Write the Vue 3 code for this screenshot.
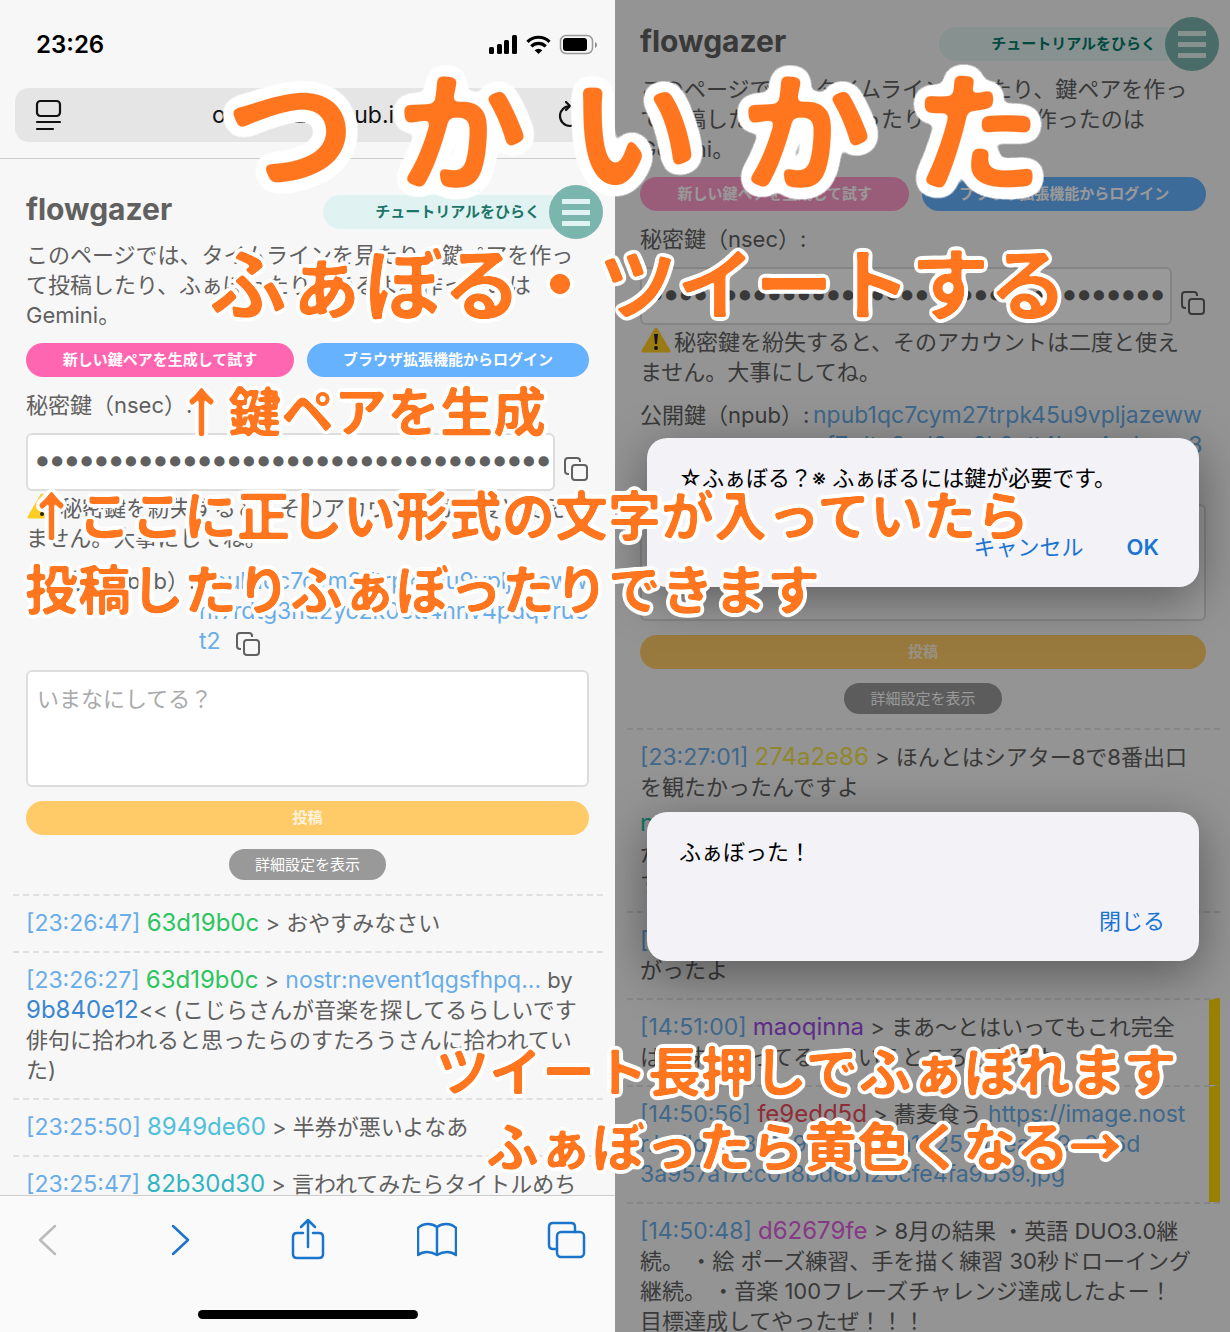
<script setup>
const npub = 'npub1qc7cym27trpk45u9vpljazeww\nnf7rdtg3nd2yc2k0ett4hnv4pdqvru3\nt2'
const secret = 'x'.repeat(35)

const phones = [
  {
    id: 'browse',
    posts: [
      [{ time: '23:26:47' }, { name: '63d19b0c', color: '#2cc45e' }, { text: ' > おやすみなさい' }],
      [
        { time: '23:26:27' },
        { name: '63d19b0c', color: '#2cc45e' },
        { text: ' > ' },
        { link: 'nostr:nevent1qgsfhpq...' },
        { text: ' by\n' },
        { name: '9b840e12', color: '#3b86cf' },
        { text: '<< (こじらさんが音楽を探してるらしいです\n俳句に拾われると思ったらのすたろうさんに拾われてい\nた)' },
      ],
      [{ time: '23:25:50' }, { name: '8949de60', color: '#4fc0da' }, { text: ' > 半券が悪いよなあ' }],
      [{ time: '23:25:47' }, { name: '82b30d30', color: '#30b5c0' }, { text: ' > 言われてみたらタイトルめち' }],
    ],
  },
  {
    id: 'faved',
    posts: [
      [{ time: '23:27:01' }, { name: '274a2e86', color: '#f2e24a' }, { text: ' > ほんとはシアター8で8番出口\nを観たかったんですよ' }],
      [{ name: 'n', color: '#20c0a8' }, { text: '\nか\nす' }],
      [{ link: '[' }, { text: '\nがったよ' }],
      [{ time: '14:51:00' }, { name: 'maoqinna', color: '#9b4be6' }, { text: ' > まあ〜とはいってもこれ完全\nは趣味でやってるっていうところもあるよ' }],
      [
        { time: '14:50:56' },
        { name: 'fe9edd5d', color: '#f04a5c' },
        { text: ' > 蕎麦食う ' },
        { link: 'https://image.nost\nr.build/5c3f6e90b28ea1a14257d3ea7b9c0e6d\n3a957a17cc018bd6b126cfe4fa9b59.jpg' },
      ],
      [
        { time: '14:50:48' },
        { name: 'd62679fe', color: '#e060e0' },
        { text: ' > 8月の結果 ・英語 DUO3.0継\n続。 ・絵 ポーズ練習、手を描く練習 30秒ドローイング\n継続。 ・音楽 100フレーズチャレンジ達成したよー！\n目標達成してやったぜ！！！' },
      ],
    ],
    faved: [3, 4],
  },
]
</script>

<template>
  <main class="guide">
    <section v-for="p in phones" :key="p.id" class="phone" :class="p.id">
      <template v-if="p.id === 'browse'">
        <div class="status">
          <span class="clock">23:26</span>
          <svg width="110" height="24" viewBox="0 0 110 24" aria-hidden="true">
            <g fill="#000">
              <rect x="1" y="14" width="5" height="7" rx="1.5" />
              <rect x="9" y="11" width="5" height="10" rx="1.5" />
              <rect x="16" y="7" width="5" height="14" rx="1.5" />
              <rect x="24" y="2" width="5" height="19" rx="1.5" />
              <path d="M50.500 21l-3.800-3.800a5.400 5.400 0 0 1 7.600 0z" />
              <rect x="75" y="5" width="24" height="13" rx="3" />
            </g>
            <g fill="none" stroke="#000" stroke-width="3.200">
              <path d="M39.500 8.800a15.600 15.600 0 0 1 22 0" />
              <path d="M43.300 13.300a10.200 10.200 0 0 1 14.400 0" />
            </g>
            <rect x="72.500" y="2.500" width="32" height="18" rx="5.500" fill="none" stroke="#999" stroke-width="1.500" />
            <path d="M107 9v6q2-1 2-3t-2-3z" fill="#888" />
          </svg>
        </div>
        <div class="address">
          <svg width="30" height="32" viewBox="0 0 30 32" fill="none" stroke="#111" stroke-width="2.200" stroke-linecap="round" aria-hidden="true">
            <rect x="3" y="2" width="23" height="15" rx="3.500" />
            <path d="M3 23h23M3 30h16" />
          </svg>
          <span>ompomz.github.io</span>
          <svg width="26" height="28" viewBox="0 0 26 28" fill="none" stroke="#111" stroke-width="2.200" stroke-linecap="round" aria-hidden="true">
            <path d="M14 5a10 10 0 1 0 10 10M14 5l-4-4M14 5l-4 4" />
          </svg>
        </div>
      </template>

      <div class="app">
        <header>
          <h1>flowgazer</h1>
          <a class="tutorial" href="#tutorial">チュートリアルをひらく</a>
          <button class="menu" aria-label="メニュー"><i></i><i></i><i></i></button>
        </header>
        <p class="intro">このページでは、タイムラインを見たり、鍵ペアを作っ<br />て投稿したり、ふぁぼったりできるよ。作ったのは<br />Gemini。</p>
        <div class="actions">
          <button class="pill pink">新しい鍵ペアを生成して試す</button>
          <button class="pill blue">ブラウザ拡張機能からログイン</button>
        </div>
        <label class="nsec-label" :for="p.id + '-nsec'">秘密鍵（nsec）:</label>
        <div class="nsec">
          <input :id="p.id + '-nsec'" type="password" :value="secret" />
          <button class="copy" aria-label="コピー">
            <svg width="26" height="26" viewBox="0 0 26 26" fill="none" stroke="currentColor" stroke-width="2" aria-hidden="true">
              <path d="M6 18H5a3 3 0 0 1-3-3V5a3 3 0 0 1 3-3h9a3 3 0 0 1 3 3v1" />
              <rect x="9" y="9" width="15" height="15" rx="3" />
            </svg>
          </button>
        </div>
        <p class="warning">
          <svg class="sign" width="32" height="28" viewBox="0 0 32 28" aria-hidden="true">
            <path d="M16 3L29 25H3z" fill="#fc2" stroke="#fc2" stroke-width="3" stroke-linejoin="round" />
            <path d="M14 8h4l-1 10h-2z" fill="#222" /><circle cx="16" cy="22" r="2" fill="#222" />
          </svg>秘密鍵を紛失すると、そのアカウントは二度と使え<br />ません。大事にしてね。
        </p>
        <div class="npub">
          <span>公開鍵（npub）:</span>
          <div>
            <a href="#npub">{{ npub }}</a>
            <button class="copy" aria-label="コピー">
              <svg width="26" height="26" viewBox="0 0 26 26" fill="none" stroke="currentColor" stroke-width="2" aria-hidden="true">
                <path d="M6 18H5a3 3 0 0 1-3-3V5a3 3 0 0 1 3-3h9a3 3 0 0 1 3 3v1" />
                <rect x="9" y="9" width="15" height="15" rx="3" />
              </svg>
            </button>
          </div>
        </div>
        <textarea :placeholder="p.id === 'browse' ? 'いまなにしてる？' : ''" aria-label="投稿内容"></textarea>
        <button class="pill post">投稿</button>
        <button class="pill more">詳細設定を表示</button>
      </div>

      <ul class="feed">
        <li v-for="(post, i) in p.posts" :key="i" :class="{ faved: p.faved?.includes(i) }"><template v-for="(s, j) in post" :key="j"><a v-if="s.time" href="#post">[{{ s.time }}]</a><template v-if="s.time">{{ ' ' }}</template><b v-if="s.name" :style="{ color: s.color }">{{ s.name }}</b><a v-if="s.link" href="#link">{{ s.link }}</a><template v-if="s.text">{{ s.text }}</template></template></li>
      </ul>

      <nav v-if="p.id === 'browse'" class="toolbar">
        <div class="tools">
          <button aria-label="戻る" class="off"><svg width="40" height="44" viewBox="0 0 40 44"><path d="M27 8L12 22l15 14" /></svg></button>
          <button aria-label="進む"><svg width="40" height="44" viewBox="0 0 40 44"><path d="M15 8l15 14-15 14" /></svg></button>
          <button aria-label="共有"><svg width="40" height="44" viewBox="0 0 40 44"><path d="M15 15H9q-4 0-4 4v17q0 4 4 4h22q4 0 4-4V19q0-4-4-4h-6M20 29V3M13 9l7-7 7 7" /></svg></button>
          <button aria-label="ブックマーク"><svg width="40" height="44" viewBox="0 0 40 44"><path d="M20 9q-4-3-9-3-6 0-10 4v27q4-3 9-3t10 3q5-3 10-3t9 3V10q-4-4-10-4-5 0-9 3zv28" /></svg></button>
          <button aria-label="タブ"><svg width="40" height="44" viewBox="0 0 40 44"><rect x="10" y="14" width="27" height="25" rx="4" /><path d="M10 31H6q-4 0-4-4V9q0-4 4-4h18q4 0 4 4v5" /></svg></button>
        </div>
        <div class="home"></div>
      </nav>

      <template v-if="p.id === 'faved'">
        <div class="dialog ask" role="dialog">
          <p>☆ふぁぼる？※ ふぁぼるには鍵が必要です。</p>
          <div><button>キャンセル</button><button class="ok">OK</button></div>
        </div>
        <div class="dialog done" role="dialog">
          <p>ふぁぼった！</p>
          <div><button>閉じる</button></div>
        </div>
      </template>
    </section>

    <svg class="defs" width="0" height="0" aria-hidden="true">
      <filter id="marker-large" x="-5%" y="-20%" width="110%" height="140%" color-interpolation-filters="sRGB">
        <feGaussianBlur in="SourceAlpha" stdDeviation="3" />
        <feComponentTransfer result="round"><feFuncA type="linear" slope="8" intercept="-3" /></feComponentTransfer>
        <feFlood flood-color="#ff761f" /><feComposite in2="round" operator="in" result="ink" />
        <feGaussianBlur in="round" stdDeviation="7" />
        <feComponentTransfer result="halo"><feFuncA type="linear" slope="50" intercept="-1" /></feComponentTransfer>
        <feFlood flood-color="#fff" /><feComposite in2="halo" operator="in" result="edge" />
        <feMerge><feMergeNode in="edge" /><feMergeNode in="ink" /></feMerge>
      </filter>
      <filter id="marker" x="-5%" y="-20%" width="110%" height="140%" color-interpolation-filters="sRGB">
        <feGaussianBlur in="SourceAlpha" stdDeviation="1.200" />
        <feComponentTransfer result="round"><feFuncA type="linear" slope="4" intercept="-1.400" /></feComponentTransfer>
        <feFlood flood-color="#ff761f" /><feComposite in2="round" operator="in" result="ink" />
        <feGaussianBlur in="round" stdDeviation="2.400" />
        <feComponentTransfer result="halo"><feFuncA type="linear" slope="24" intercept="-0.700" /></feComponentTransfer>
        <feFlood flood-color="#fff" /><feComposite in2="halo" operator="in" result="edge" />
        <feMerge><feMergeNode in="edge" /><feMergeNode in="ink" /></feMerge>
      </filter>
    </svg>
    <h2 class="note title"><span v-for="(c, i) in 'つかいかた'" :key="i">{{ c }}</span></h2>
    <p class="note subtitle">ふぁぼる・ツイートする</p>
    <p class="note generate">↑鍵ペアを生成</p>
    <p class="note secret">↑ここに正しい形式の文字が入っていたら<br />投稿したりふぁぼったりできます</p>
    <p class="note hold">ツイート長押しでふぁぼれます</p>
    <p class="note yellow">ふぁぼったら黄色くなる→</p>
  </main>
</template>

<style>
body { margin: 0; }
</style>

<style scoped>
* { box-sizing: border-box; }
h1, h2, p, ul { margin: 0; padding: 0; }
button { border: 0; padding: 0; font: inherit; background: none; color: inherit; }
a { color: #69ade8; text-decoration: none; }

.guide {
  position: relative;
  display: grid;
  grid-template-columns: 1fr 1fr;
  height: 100vh;
  overflow: hidden;
  background: #f7f7f7;
  color: #606060;
  font: 22px/30px Inter, "Noto Sans CJK JP", sans-serif;
}
.phone { position: relative; min-width: 0; overflow: hidden; display: flex; flex-direction: column; }
.faved.phone::after { content: ""; position: absolute; inset: 0; background: rgba(0, 0, 0, .4); }

.status { display: flex; flex: none; justify-content: space-between; align-items: center; height: 88px; padding: 2px 17px 0 36px; color: #000; }
.clock { font-size: 24px; font-weight: 600; }
.address {
  display: flex; flex: none; align-items: center; justify-content: space-between;
  height: 54px; margin: 0 15px 16px; padding: 0 18px 0 19px;
  border-radius: 14px; background: #e5e5e5; color: #111; font-size: 23px;
}
.address + .app { border-top: 1px solid #ccc; padding-top: 26px; }

.app { display: flex; flex: none; flex-direction: column; padding: 17px 26px 0; }
.faved .app { padding: 17px 24px 0 25px; }
header { display: flex; align-items: center; height: 54px; margin-bottom: 1px; }
.browse header { margin-right: -14px; }
.faved header { margin: 0 -13px 3px 0; }
h1 { flex: 1; padding-bottom: 6px; font-size: 30px; font-weight: 700; }
.tutorial {
  height: 34px; padding: 0 12px 0 52px; margin-right: -3px; border-radius: 17px 0 0 17px;
  background: #e0f2f1; color: #1d7569; font-size: 15px; line-height: 34px; font-weight: 700;
}
.faved .tutorial { color: #007a68; }
.menu {
  display: flex; flex-direction: column; align-items: center; justify-content: center; gap: 6px;
  width: 54px; height: 54px; border-radius: 50%; background: #7ab5ae;
}
.menu i { width: 28px; height: 5px; background: #e0f2f1; }
.intro, .warning { white-space: nowrap; }
.actions { display: flex; gap: 13px; margin: 13px 0; }
.pill { height: 34px; border-radius: 17px; color: #fff; font-size: 15px; line-height: 34px; font-weight: 700; }
.actions .pill { flex: 268 1 0; }
.actions .blue { flex-grow: 282; background: #66b2ff; }
.pink { background: #ff66b2; }
.faved .pink { background: #ff9ccc; }
.nsec { display: flex; align-items: center; gap: 8px; margin-top: 13px; }
.nsec input {
  flex: 1; min-width: 0; height: 58px; padding: 0 0 0 7px; border: 2px solid #ddd; border-radius: 6px;
  background: #fff; color: #606060; font: 25px "DejaVu Sans", sans-serif; -webkit-text-stroke: 3px #606060;
}
.copy { display: inline-block; width: 26px; height: 26px; line-height: 0; }
.nsec .copy { margin-top: 14px; }
.warning { margin-top: 1px; }
.sign { vertical-align: -4px; margin-right: 2px; }
.npub { display: flex; margin: 13px 0; white-space: pre; }
.npub span { width: 173px; }
.npub .copy { margin-left: 14px; vertical-align: -8px; }
.npub a, .feed a { font-size: 23px; }
textarea {
  height: 117px; padding: 12px 9px; resize: none; border: 2px solid #ddd; border-radius: 6px;
  background: #fff; font: inherit;
}
textarea::placeholder { color: #aaa; }
.post { margin: 14px 0; background: #ffcb68; color: #fff3dc; }
.more { align-self: center; height: 31px; padding: 0 26px; background: #999; line-height: 31px; font-weight: 400; margin-bottom: 14px; }

.feed { flex: 1; min-height: 0; overflow: hidden; list-style: none; padding: 0 12px 0 13px; }
.faved .feed { padding: 0 10px 0 12px; }
.feed li { padding: 12px 13px 13px; border-top: 2px dashed #e0e0e0; white-space: pre; }
.feed b { font-size: 24px; font-weight: 400; line-height: 24px; }
.faved .feed li:first-child { padding-bottom: 6px; }
.faved .feed li:nth-child(2) { border-top: 0; padding-top: 0; }
.feed .faved { border-right: 11px solid #ffd700; }

.toolbar { flex: none; height: 137px; border-top: 1px solid #ccc; background: #fafafb; color: #1b74cc; }
.tools { display: flex; justify-content: space-between; padding: 22px 28px 0; }
.tools svg { display: block; fill: none; stroke: currentColor; stroke-width: 2.500; stroke-linecap: round; stroke-linejoin: round; }
.off { color: #bbb; }
.home { width: 220px; height: 9px; margin: 48px auto 0; border-radius: 5px; background: #000; }

.dialog {
  position: absolute; z-index: 1; left: 32px; right: 31px; height: 149px; padding: 25px 34px 0 32px; border-radius: 20px;
  background: #f2f2f7; color: #000; box-shadow: 0 12px 50px rgba(0, 0, 0, .4);
}
.dialog p { white-space: nowrap; }
.dialog div { display: flex; justify-content: flex-end; gap: 43px; margin-top: 39px; color: #1a75d2; }
.dialog .ok { margin-right: 6px; font-weight: 600; }
.ask { top: 438px; }
.done { top: 812px; }

.defs { position: absolute; }
.note {
  position: absolute; z-index: 2; white-space: nowrap; color: #ff761f; filter: url(#marker);
  font: 700 53px/74px "Noto Sans CJK JP", sans-serif;
}
.title { display: flex; gap: 42px; left: 225px; top: 34px; font-size: 130px; line-height: 180px; filter: url(#marker-large); }
.subtitle { left: 209px; top: 228px; font-size: 78px; line-height: 104px; }
.generate { left: 175px; top: 372px; }
.secret { left: 25px; top: 476px; }
.hold { left: 436px; top: 1032px; }
.yellow { left: 486px; top: 1107px; }
</style>
